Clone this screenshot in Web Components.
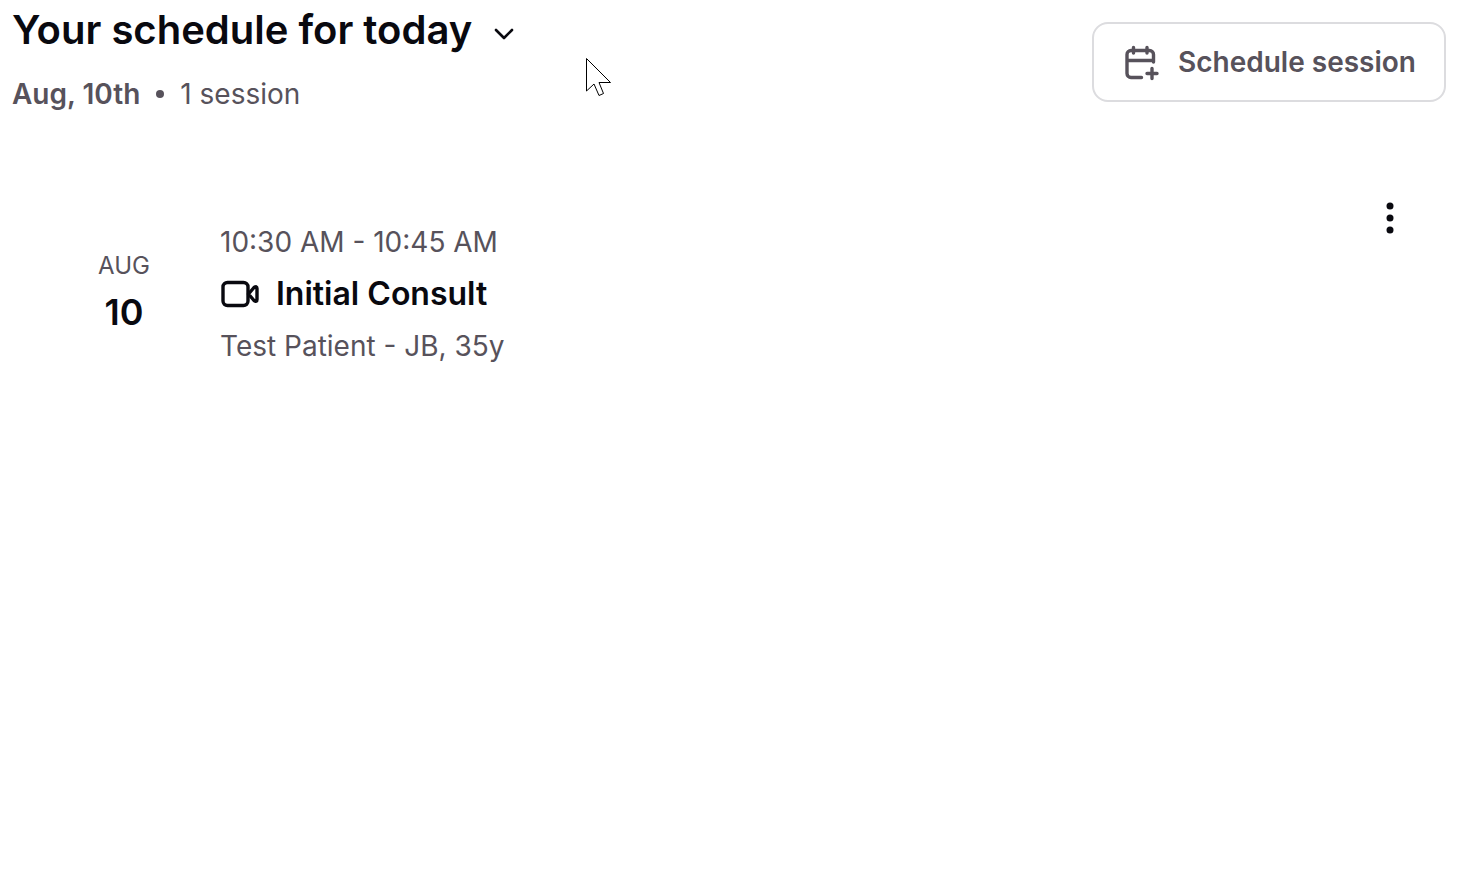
<!DOCTYPE html>
<html lang="en">
<head>
<meta charset="utf-8">
<meta name="viewport" content="width=device-width, initial-scale=1">
<title>Schedule</title>
<style>
  body {
    margin: 0;
    background: #fff;
    color: #09090f;
    font-family: Inter, "Liberation Sans", sans-serif;
    --muted: #57525b;
    --border: #dcdcdf;
  }
</style>
</head>
<body>
<schedule-page>
  <schedule-header slot="header" date="Aug, 10th" count="1 session">Your schedule for today</schedule-header>
  <action-button slot="action">Schedule session</action-button>
  <session-card month="Aug" day="10" time="10:30 AM - 10:45 AM" patient="Test Patient - JB, 35y">Initial Consult</session-card>
</schedule-page>
<mouse-pointer></mouse-pointer>
<script>
  class BaseElement extends HTMLElement {
    constructor() {
      super();
      this.attachShadow({ mode: "open" }).innerHTML = this.constructor.markup;
    }
    connectedCallback() {
      for (const node of this.shadowRoot.querySelectorAll("[data-attr]")) {
        node.textContent = this.getAttribute(node.dataset.attr);
      }
    }
  }

  customElements.define("schedule-page", class extends BaseElement {
    static markup = `
      <style>
        :host { display: block; }
        header { display: flex; justify-content: space-between; align-items: flex-start; padding: 6px 20px 0 12px; }
        .action { padding-top: 16px; }
        main { padding: 74px 20px 0 12px; }
      </style>
      <header><slot name="header"></slot><div class="action"><slot name="action"></slot></div></header>
      <main><slot></slot></main>`;
  });

  customElements.define("schedule-header", class extends BaseElement {
    static markup = `
      <style>
        :host { display: block; }
        h1 { margin: 0; font-size: 40px; line-height: 48px; font-weight: 600; }
        button { display: flex; align-items: center; gap: 20px; padding: 0; border: 0; background: none; font: inherit; color: inherit; cursor: pointer; }
        svg { display: block; margin-top: 8px; }
        p { display: flex; align-items: center; gap: 16px; margin: 20px 0 0; font-size: 28px; line-height: 40px; color: var(--muted); }
        strong { font-weight: 600; }
        i { width: 8px; height: 8px; border-radius: 50%; background: currentColor; }
      </style>
      <h1><button type="button" aria-haspopup="listbox"><slot></slot>
        <svg width="26" height="26" viewBox="0 0 26 26" fill="none" stroke="currentColor" stroke-width="2.6" stroke-linecap="round" stroke-linejoin="round" aria-hidden="true"><path d="M4 9l8 8 8-8"/></svg>
      </button></h1>
      <p><strong data-attr="date"></strong><i></i><span data-attr="count"></span></p>`;
  });

  customElements.define("action-button", class extends BaseElement {
    static markup = `
      <style>
        :host { display: block; }
        button { display: flex; align-items: center; gap: 18px; height: 80px; padding: 0 28px; border: 2px solid var(--border); border-radius: 16px; background: #fff; color: var(--muted); font: 600 28px/40px Inter, "Liberation Sans", sans-serif; cursor: pointer; }
      </style>
      <button type="button">
        <svg width="38" height="40" viewBox="0 0 38 40" fill="none" stroke="currentColor" stroke-width="3.4" stroke-linecap="round" stroke-linejoin="round" aria-hidden="true">
          <path d="M19.500 35.500H9a4 4 0 0 1-4-4V12.500a4 4 0 0 1 4-4h18.500a4 4 0 0 1 4 4V20M5 18.500h26.500M11.500 5.500v5.500M25 5.500v5.500M30 26.500v10M25 31.500h10"/>
        </svg>
        <slot></slot>
      </button>`;
  });

  customElements.define("session-card", class extends BaseElement {
    static markup = `
      <style>
        :host { display: block; }
        article { display: grid; grid-template-columns: 128px 1fr auto; column-gap: 32px; padding: 0 32px 0 48px; }
        time { display: flex; flex-direction: column; align-items: center; align-self: center; }
        .month { font-size: 24px; line-height: 40px; color: var(--muted); text-transform: uppercase; }
        .day { font-size: 36px; line-height: 52px; font-weight: 600; }
        .details { display: flex; flex-direction: column; gap: 12px; padding-top: 34px; font-size: 28px; line-height: 40px; color: var(--muted); }
        p, h2 { margin: 0; }
        h2 { display: flex; align-items: center; gap: 16px; font-size: 32px; line-height: 40px; font-weight: 600; color: #09090f; }
        .date { display: grid; padding-top: 30px; }
        button { display: grid; place-items: center; width: 48px; height: 60px; padding: 0; border: 0; background: none; color: inherit; cursor: pointer; }
      </style>
      <article>
        <div class="date"><time datetime="08-10"><span class="month" data-attr="month"></span><span class="day" data-attr="day"></span></time></div>
        <div class="details">
          <p data-attr="time"></p>
          <h2>
            <svg width="40" height="32" viewBox="0 0 40 32" fill="none" stroke="currentColor" stroke-width="3.4" stroke-linejoin="round" aria-hidden="true">
              <rect x="3" y="4.500" width="25" height="23" rx="4.500"/><path d="M28.500 16l5.500-6.500q3-2 3 1v11q0 3-3 1z"/>
            </svg>
            <slot></slot>
          </h2>
          <p data-attr="patient"></p>
        </div>
        <button type="button" aria-label="Session options">
          <svg width="8" height="32" viewBox="0 0 8 32" fill="currentColor" aria-hidden="true"><circle cx="4" cy="4" r="3.500"/><circle cx="4" cy="16" r="3.500"/><circle cx="4" cy="28" r="3.500"/></svg>
        </button>
      </article>`;
  });

  customElements.define("mouse-pointer", class extends BaseElement {
    static markup = `
      <style>:host { position: absolute; left: 586px; top: 58px; pointer-events: none; } svg { display: block; }</style>
      <svg width="26" height="40" viewBox="0 0 26 40" fill="#fff" stroke="#000" aria-hidden="true"><path d="M.5.500v32.500l7.500-7 5 11.500 4.500-2-4.500-11h11.500z"/></svg>`;
  });
</script>
</body>
</html>
